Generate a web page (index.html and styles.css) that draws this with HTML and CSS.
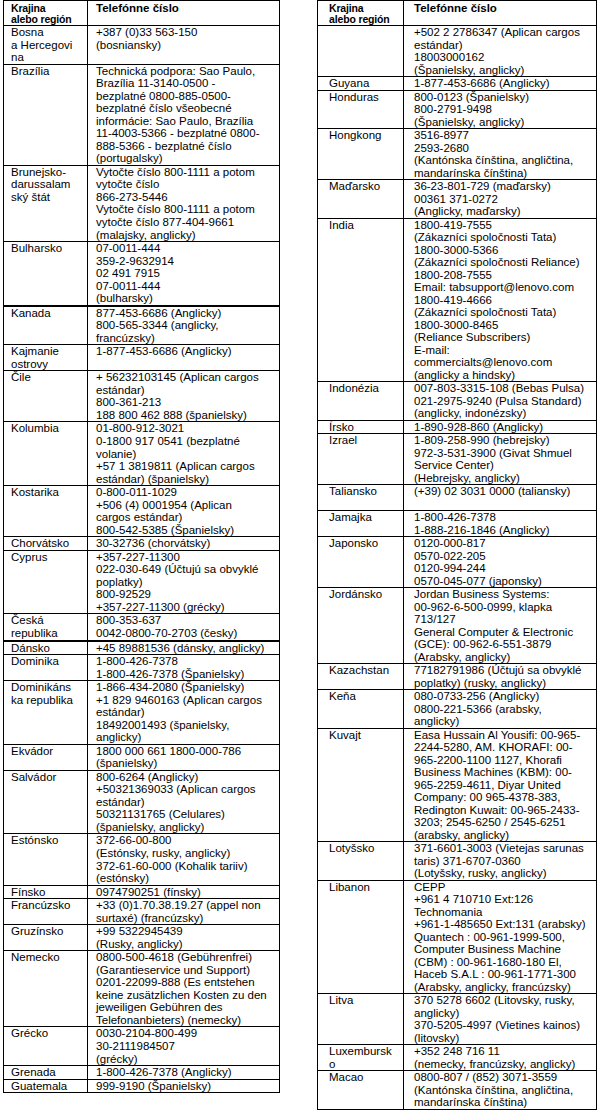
FILE: index.html
```html
<!DOCTYPE html>
<html lang="sk">
<head>
<meta charset="utf-8">
<title>Telefónne čísla</title>
<link rel="stylesheet" href="styles.css">
</head>
<body>
<div class="page">
  <table class="phones left">
    <colgroup><col class="c1"><col class="c2"></colgroup>
    <thead>
      <tr><th class="h1">Krajina<br>alebo región</th><th class="h2">Telefónne číslo</th></tr>
    </thead>
    <tbody>
      <tr><td>Bosna<br>a Hercegovi<br>na</td><td>+387 (0)33 563-150<br>(bosniansky)</td></tr>
      <tr><td>Brazília</td><td>Technická podpora: Sao Paulo,<br>Brazília 11-3140-0500 -<br>bezplatné 0800-885-0500-<br>bezplatné číslo všeobecné<br>informácie: Sao Paulo, Brazília<br>11-4003-5366 - bezplatné 0800-<br>888-5366 - bezplatné číslo<br>(portugalsky)</td></tr>
      <tr><td>Brunejsko-<br>darussalam<br>ský štát</td><td>Vytočte číslo 800-1111 a potom<br>vytočte číslo<br>866-273-5446<br>Vytočte číslo 800-1111 a potom<br>vytočte číslo 877-404-9661<br>(malajsky, anglicky)</td></tr>
      <tr class="thick"><td>Bulharsko</td><td>07-0011-444<br>359-2-9632914<br>02 491 7915<br>07-0011-444<br>(bulharsky)</td></tr>
      <tr><td>Kanada</td><td>877-453-6686 (Anglicky)<br>800-565-3344 (anglicky,<br>francúzsky)</td></tr>
      <tr><td>Kajmanie<br>ostrovy</td><td>1-877-453-6686 (Anglicky)</td></tr>
      <tr><td>Čile</td><td>+ 56232103145 (Aplican cargos<br>estándar)<br>800-361-213<br>188 800 462 888 (španielsky)</td></tr>
      <tr><td>Kolumbia</td><td>01-800-912-3021<br>0-1800 917 0541 (bezplatné<br>volanie)<br>+57 1 3819811 (Aplican cargos<br>estándar) (španielsky)</td></tr>
      <tr><td>Kostarika</td><td>0-800-011-1029<br>+506 (4) 0001954 (Aplican<br>cargos estándar)<br>800-542-5385 (Španielsky)</td></tr>
      <tr><td>Chorvátsko</td><td>30-32736 (chorvátsky)</td></tr>
      <tr><td>Cyprus</td><td>+357-227-11300<br>022-030-649 (Účtujú sa obvyklé<br>poplatky)<br>800-92529<br>+357-227-11300 (grécky)</td></tr>
      <tr class="thick"><td>Česká<br>republika</td><td>800-353-637<br>0042-0800-70-2703 (česky)</td></tr>
      <tr><td>Dánsko</td><td>+45 89881536 (dánsky, anglicky)</td></tr>
      <tr><td>Dominika</td><td>1-800-426-7378<br>1-800-426-7378 (Španielsky)</td></tr>
      <tr><td>Dominikáns<br>ka republika</td><td>1-866-434-2080 (Španielsky)<br>+1 829 9460163 (Aplican cargos<br>estándar)<br>18492001493 (španielsky,<br>anglicky)</td></tr>
      <tr><td>Ekvádor</td><td>1800 000 661 1800-000-786<br>(španielsky)</td></tr>
      <tr><td>Salvádor</td><td>800-6264 (Anglicky)<br>+50321369033 (Aplican cargos<br>estándar)<br>50321131765 (Celulares)<br>(španielsky, anglicky)</td></tr>
      <tr><td>Estónsko</td><td>372-66-00-800<br>(Estónsky, rusky, anglicky)<br>372-61-60-000 (Kohalik tariiv)<br>(estónsky)</td></tr>
      <tr><td>Fínsko</td><td>0974790251 (fínsky)</td></tr>
      <tr><td>Francúzsko</td><td>+33 (0)1.70.38.19.27 (appel non<br>surtaxé) (francúzsky)</td></tr>
      <tr><td>Gruzínsko</td><td>+99 5322945439<br>(Rusky, anglicky)</td></tr>
      <tr><td>Nemecko</td><td>0800-500-4618 (Gebührenfrei)<br>(Garantieservice und Support)<br>0201-22099-888 (Es entstehen<br>keine zusätzlichen Kosten zu den<br>jeweiligen Gebühren des<br>Telefonanbieters) (nemecky)</td></tr>
      <tr><td>Grécko</td><td>0030-2104-800-499<br>30-2111984507<br>(grécky)</td></tr>
      <tr><td>Grenada</td><td>1-800-426-7378 (Anglicky)</td></tr>
      <tr><td>Guatemala</td><td>999-9190 (Španielsky)</td></tr>
    </tbody>
  </table>

  <table class="phones right">
    <colgroup><col class="c1"><col class="c2"></colgroup>
    <thead>
      <tr><th class="h1">Krajina<br>alebo región</th><th class="h2">Telefónne číslo</th></tr>
    </thead>
    <tbody>
      <tr><td></td><td>+502 2 2786347 (Aplican cargos<br>estándar)<br>18003000162<br>(Španielsky, anglicky)</td></tr>
      <tr><td>Guyana</td><td>1-877-453-6686 (Anglicky)</td></tr>
      <tr><td>Honduras</td><td>800-0123 (Španielsky)<br>800-2791-9498<br>(Španielsky, anglicky)</td></tr>
      <tr><td>Hongkong</td><td>3516-8977<br>2593-2680<br>(Kantónska čínština, angličtina,<br>mandarínska čínština)</td></tr>
      <tr><td>Maďarsko</td><td>36-23-801-729 (maďarsky)<br>00361 371-0272<br>(Anglicky, maďarsky)</td></tr>
      <tr><td>India</td><td>1800-419-7555<br>(Zákazníci spoločnosti Tata)<br>1800-3000-5366<br>(Zákazníci spoločnosti Reliance)<br>1800-208-7555<br>Email: tabsupport@lenovo.com<br>1800-419-4666<br>(Zákazníci spoločnosti Tata)<br>1800-3000-8465<br>(Reliance Subscribers)<br>E-mail:<br>commercialts@lenovo.com<br>(anglicky a hindsky)</td></tr>
      <tr><td>Indonézia</td><td>007-803-3315-108 (Bebas Pulsa)<br>021-2975-9240 (Pulsa Standard)<br>(anglicky, indonézsky)</td></tr>
      <tr><td>Írsko</td><td>1-890-928-860 (Anglicky)</td></tr>
      <tr><td>Izrael</td><td>1-809-258-990 (hebrejsky)<br>972-3-531-3900 (Givat Shmuel<br>Service Center)<br>(Hebrejsky, anglicky)</td></tr>
      <tr><td>Taliansko</td><td>(+39) 02 3031 0000 (taliansky)<br>&nbsp;</td></tr>
      <tr><td>Jamajka</td><td>1-800-426-7378<br>1-888-216-1846 (Anglicky)</td></tr>
      <tr><td>Japonsko</td><td>0120-000-817<br>0570-022-205<br>0120-994-244<br>0570-045-077 (japonsky)</td></tr>
      <tr><td>Jordánsko</td><td>Jordan Business Systems:<br>00-962-6-500-0999, klapka<br>713/127<br>General Computer &amp; Electronic<br>(GCE): 00-962-6-551-3879<br>(Arabsky, anglicky)</td></tr>
      <tr><td>Kazachstan</td><td>77182791986 (Účtujú sa obvyklé<br>poplatky) (rusky, anglicky)</td></tr>
      <tr><td>Keňa</td><td>080-0733-256 (Anglicky)<br>0800-221-5366 (arabsky,<br>anglicky)</td></tr>
      <tr><td>Kuvajt</td><td>Easa Hussain Al Yousifi: 00-965-<br>2244-5280, AM. KHORAFI: 00-<br>965-2200-1100 1127, Khorafi<br>Business Machines (KBM): 00-<br>965-2259-4611, Diyar United<br>Company: 00 965-4378-383,<br>Redington Kuwait: 00-965-2433-<br>3203; 2545-6250 / 2545-6251<br>(arabsky, anglicky)</td></tr>
      <tr><td>Lotyšsko</td><td>371-6601-3003 (Vietejas sarunas<br>taris) 371-6707-0360<br>(Lotyšsky, rusky, anglicky)</td></tr>
      <tr><td>Libanon</td><td>CEPP<br>+961 4 710710 Ext:126<br>Technomania<br>+961-1-485650 Ext:131 (arabsky)<br>Quantech : 00-961-1999-500,<br>Computer Business Machine<br>(CBM) : 00-961-1680-180 El,<br>Haceb S.A.L : 00-961-1771-300<br>(Arabsky, anglicky, francúzsky)</td></tr>
      <tr><td>Litva</td><td>370 5278 6602 (Litovsky, rusky,<br>anglicky)<br>370-5205-4997 (Vietines kainos)<br>(litovsky)</td></tr>
      <tr><td>Luxembursk<br>o</td><td>+352 248 716 11<br>(nemecky, francúzsky, anglicky)</td></tr>
      <tr><td>Macao</td><td>0800-807 / (852) 3071-3559<br>(Kantónska čínština, angličtina,<br>mandarínska čínština)</td></tr>
    </tbody>
  </table>
</div>
</body>
</html>
```

FILE: styles.css
```css
html, body {
  margin: 0;
  padding: 0;
  background: #ffffff;
}

.page {
  display: flex;
  align-items: flex-start;
  gap: 37px;
  padding-left: 3px;
  font-family: "Liberation Sans", Arial, sans-serif;
  color: #000000;
}

.phones {
  border-collapse: separate;
  border-spacing: 0;
  table-layout: fixed;
  border-top: 1px solid #000;
  border-left: 1px solid #000;
}

.phones th,
.phones td {
  box-sizing: border-box;
  border-right: 1px solid #000;
  border-bottom: 1px solid #000;
  vertical-align: top;
  text-align: left;
  white-space: nowrap;
  overflow: visible;
  padding-top: 0;
  padding-bottom: 0;
}

.phones td {
  font-size: 11.5px;
  line-height: 12.5px;
  font-weight: normal;
}

.left td {
  line-height: 12.53px;
}

.phones th {
  font-weight: bold;
  line-height: 11px;
  padding-top: 1.5px;
  padding-bottom: 0.5px;
}

.phones th.h1 {
  font-size: 10.5px;
  letter-spacing: -0.15px;
}

.phones th.h2 {
  font-size: 11.5px;
}

.left { width: 277px; }
.left .c1 { width: 84px; }
.left .c2 { width: 192px; }
.left th:first-child,
.left td:first-child { padding-left: 7px; }
.left th:last-child,
.left td:last-child { padding-left: 8px; }

.right { width: 280px; }
.right .c1 { width: 86px; }
.right .c2 { width: 193px; }
.right th:first-child,
.right td:first-child { padding-left: 11px; }
.right th:last-child,
.right td:last-child { padding-left: 10px; }

.phones tr.thick td {
  border-bottom-width: 2px;
}
```
